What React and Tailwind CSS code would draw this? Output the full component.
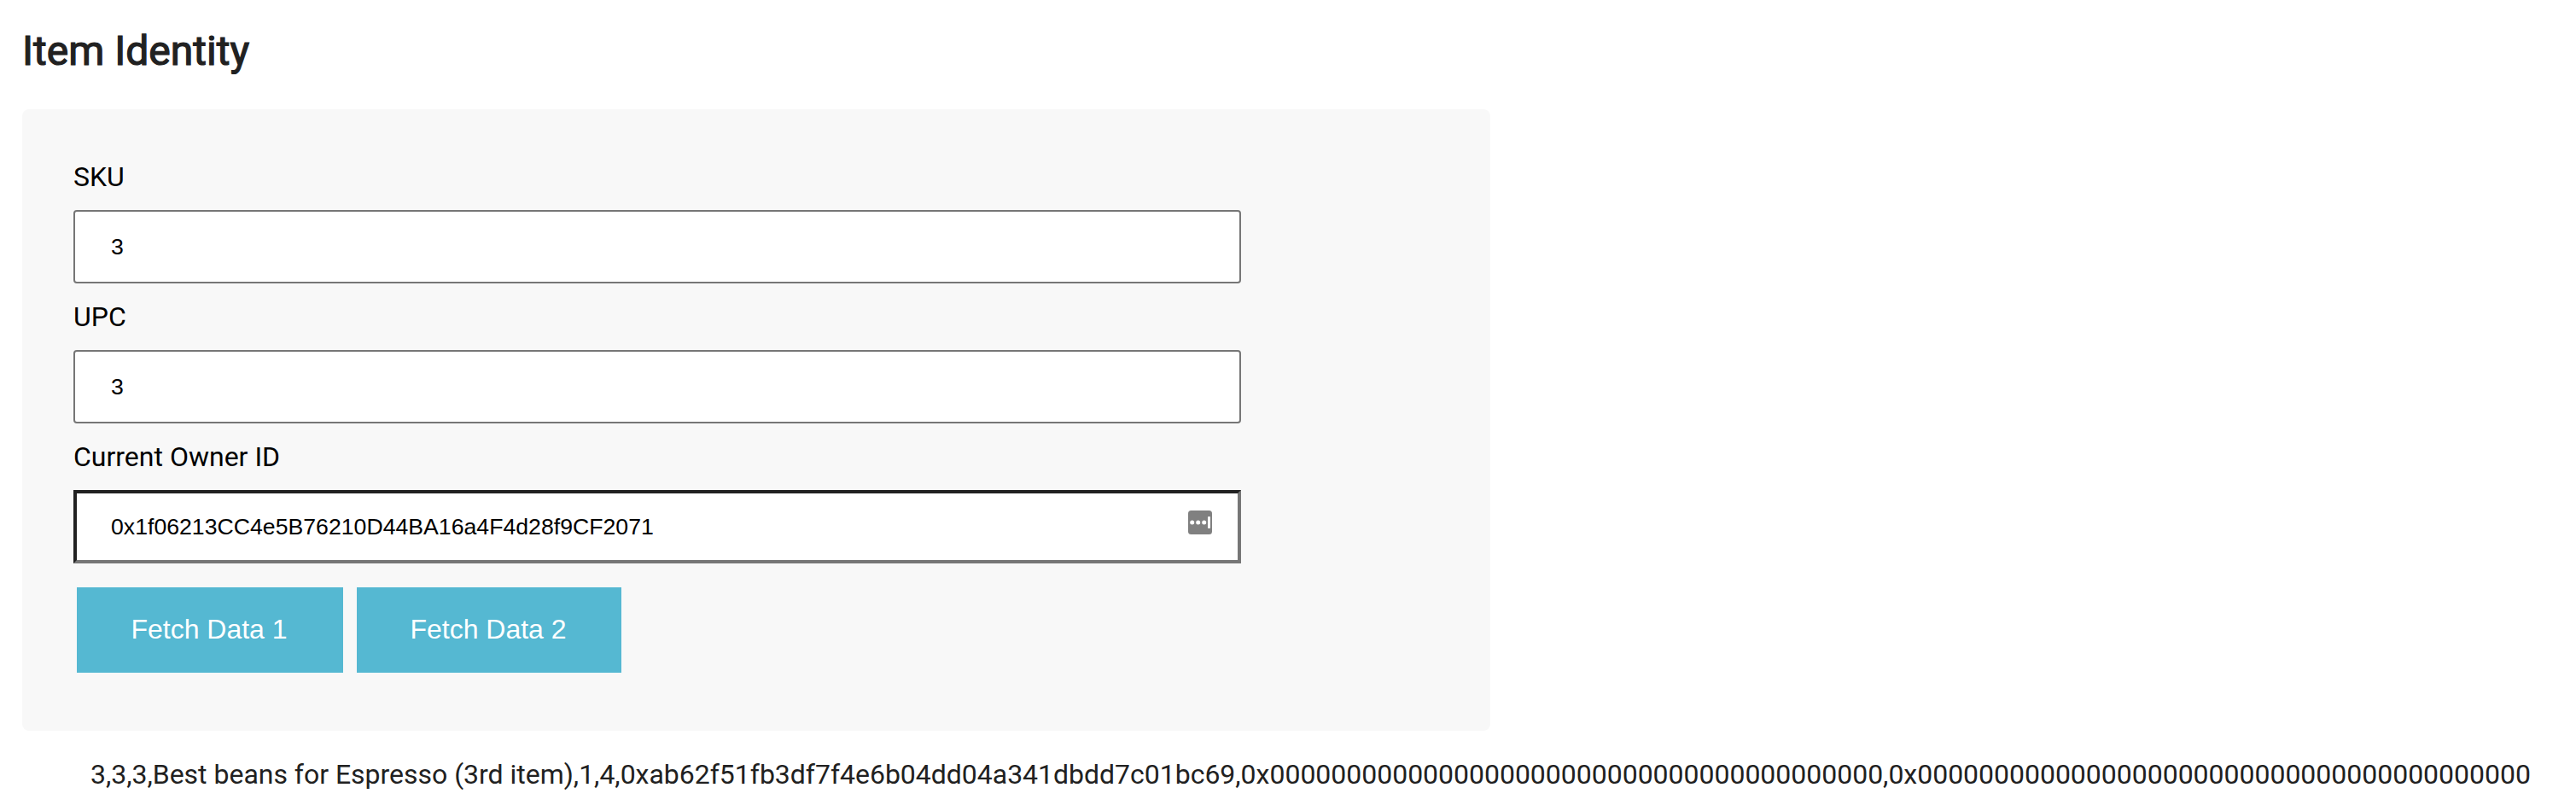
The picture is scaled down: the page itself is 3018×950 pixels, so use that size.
import React from "react";

const ZERO_ADDRESS = "0x" + "0".repeat(40);

const result = [
  "3",
  "3",
  "3",
  "Best beans for Espresso (3rd item)",
  "1",
  "4",
  "0xab62f51fb3df7f4e6b04dd04a341dbdd7c01bc69",
  ZERO_ADDRESS,
  ZERO_ADDRESS,
].join(",");

function PasswordManagerIcon() {
  return (
    <svg className="block h-7 w-7" viewBox="0 0 28 28">
      <rect width="28" height="28" rx="3.5" fill="#808080" />
      <circle cx="4.7" cy="14" r="2.5" fill="#fff" />
      <circle cx="11.7" cy="14" r="2.5" fill="#fff" />
      <circle cx="18.7" cy="14" r="2.5" fill="#fff" />
      <rect x="23" y="7" width="3" height="14" rx="1" fill="#fff" />
    </svg>
  );
}

function Label({ children }) {
  return <div className="h-[38px] text-[32px] leading-[38px] text-black">{children}</div>;
}

const inputText =
  "h-[86px] w-[1368px] bg-white font-['Liberation_Sans',Arial,sans-serif] text-[26.667px] text-black outline-none";

function Button({ children, className }) {
  return (
    <button
      className={`h-[100px] bg-[#55b8d2] pb-[2px] pr-[2px] text-center font-['Liberation_Sans',Arial,sans-serif] text-[32px] text-white ${className}`}
    >
      {children}
    </button>
  );
}

export default function App() {
  return (
    <div className="h-[950px] w-[3018px] overflow-hidden bg-white pl-[26px] pt-[30px] font-[Roboto,sans-serif] text-[#212121]">
      <h2 className="h-[98px] text-[48px] font-normal leading-[60px] [-webkit-text-stroke:1.2px_#212121]">Item Identity</h2>
      <div className="h-[728px] w-[1720px] rounded-lg bg-[#f8f8f8] px-[60px] pt-[60px]">
        <Label>SKU</Label>
        <input
          className={`mt-5 block rounded-[4px] border-2 border-[#767676] px-[42px] ${inputText}`}
          defaultValue="3"
        />
        <div className="mt-[20px]">
          <Label>UPC</Label>
        </div>
        <input
          className={`mt-5 block rounded-[4px] border-2 border-[#767676] px-[42px] ${inputText}`}
          defaultValue="3"
        />
        <div className="mt-[20px]">
          <Label>Current Owner ID</Label>
        </div>
        <div
          className={`mt-5 flex items-center border-4 border-b-[#767676] border-l-[#212121] border-r-[#767676] border-t-[#212121] pl-10 pr-[30px] ${inputText}`}
        >
          <input
            className="min-w-0 flex-1 bg-transparent outline-none"
            defaultValue="0x1f06213CC4e5B76210D44BA16a4F4d28f9CF2071"
          />
          <div className="mb-[10px]">
            <PasswordManagerIcon />
          </div>
        </div>
        <div className="ml-1 mt-7 flex gap-4">
          <Button className="w-[312px]">Fetch Data 1</Button>
          <Button className="w-[310px]">Fetch Data 2</Button>
        </div>
      </div>
      <div className="mt-8 whitespace-nowrap pl-20 text-[32px] leading-[38px] tracking-[-0.018px]">{result}</div>
    </div>
  );
}
